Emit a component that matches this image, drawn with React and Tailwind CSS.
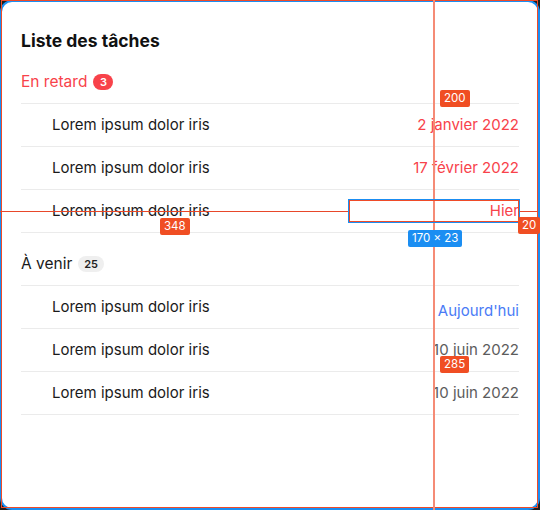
const lateTasks = [
  { label: 'Lorem ipsum dolor iris', date: '2 janvier 2022' },
  { label: 'Lorem ipsum dolor iris', date: '17 février 2022' },
  { label: 'Lorem ipsum dolor iris', date: 'Hier' },
];

const upcomingTasks = [
  { label: 'Lorem ipsum dolor iris', date: "Aujourd'hui", today: true },
  { label: 'Lorem ipsum dolor iris', date: '10 juin 2022' },
  { label: 'Lorem ipsum dolor iris', date: '10 juin 2022' },
];

const TaskRow = ({ label, date, className }) => (
  <div className="flex h-[43px] items-center justify-between border-b border-[#ebebeb] pl-[31px]">
    <span className="text-[15px] text-[#1a1a1a]">{label}</span>
    <span className={'text-[15px] ' + className}>{date}</span>
  </div>
);

const Tag = ({ children, className }) => (
  <span className={'absolute rounded-[2px] px-[4px] text-[11.5px] leading-[17px] text-white ' + className}>{children}</span>
);

export default function App() {
  return (
    <div className="relative h-[510px] w-[540px] overflow-hidden bg-[#1e1e1e] font-['Inter',sans-serif]">
      <div className="flex h-full flex-col rounded-[12px] border-2 border-[#1b8ef2] bg-white px-[19px] pt-[27px]">
        <h1 className="text-[17.5px] font-bold leading-[24px] text-[#111]">Liste des tâches</h1>

        <div className="mt-[8px] flex h-[43px] items-center gap-[6px] border-b border-[#ebebeb]">
          <span className="text-[15.5px] text-[#f8424a]">En retard</span>
          <span className="flex h-[16px] min-w-[20px] items-center justify-center rounded-full bg-[#f8424a] px-[6px] text-[11px] font-semibold text-white">3</span>
        </div>
        {lateTasks.map((t, i) => (
          <TaskRow key={i} {...t} className="text-[#f8424a]" />
        ))}

        <div className="mt-[10px] flex h-[43px] items-center gap-[6px] border-b border-[#ebebeb]">
          <span className="text-[15.5px] text-[#1a1a1a]">À venir</span>
          <span className="flex h-[16px] items-center justify-center rounded-full bg-[#efefef] px-[6px] text-[11px] font-semibold text-[#222]">25</span>
        </div>
        {upcomingTasks.map((t, i) => (
          <TaskRow key={i} {...t} className={t.today ? 'translate-y-[4px] text-[#4a7bf6]' : 'text-[#5c5c5c]'} />
        ))}
      </div>

      {/* measurement overlay */}
      <div className="pointer-events-none absolute left-[1px] top-0 h-[508px] w-[537px] border border-[#ef4b28]" />
      <div className="pointer-events-none absolute left-[433px] top-0 h-[510px] w-[2px] bg-[#f58b76]" />
      <div className="pointer-events-none absolute left-0 top-[211px] h-px w-[348px] bg-[#e8472a]" />
      <div className="pointer-events-none absolute left-[520px] top-[211px] h-px w-[18px] bg-[#e8472a]" />
      <div className="pointer-events-none absolute left-[348px] top-[199px] h-[24px] w-[172px] border border-[#1b8ef2]">
        <div className="h-full w-full border border-[#ef4b28]" />
      </div>
      <Tag className="left-[440px] top-[90px] bg-[#f04e23]">200</Tag>
      <Tag className="left-[160px] top-[218px] bg-[#f04e23]">348</Tag>
      <Tag className="left-[518px] top-[217px] bg-[#f04e23]">20</Tag>
      <Tag className="left-[408px] top-[230px] bg-[#1b8ef2]">170 × 23</Tag>
      <Tag className="left-[440px] top-[356px] bg-[#f04e23]">285</Tag>
    </div>
  );
}
